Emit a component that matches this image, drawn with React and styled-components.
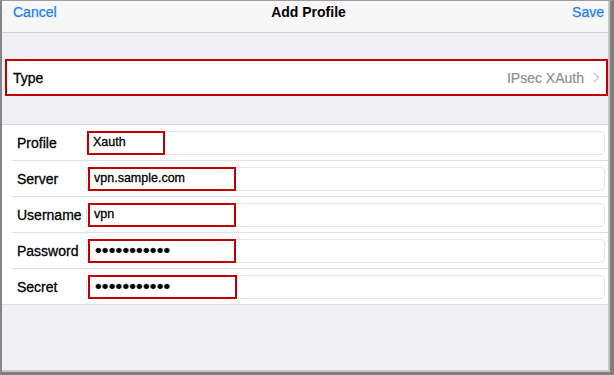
import React from "react";
import styled, { createGlobalStyle } from "styled-components";

const Global = createGlobalStyle`
  html, body { margin: 0; padding: 0; background: #ffffff; }
  body { font-family: "Liberation Sans", Arial, sans-serif; }
  * { box-sizing: border-box; }
`;

const Frame = styled.div`
  width: 614px;
  height: 375px;
  border-left: 2px solid #858585;
  border-top: 1px solid #9c9c9c;
  border-right: 4px solid #7e7e7e;
  border-bottom: 3px solid #7e7e7e;
  display: flex;
`;

const Screen = styled.div`
  flex: 1;
  display: flex;
  flex-direction: column;
  background: #efeff4;
  border-right: 2px solid #c6c6c6;
  border-bottom: 2px solid #c6c6c6;
  overflow: hidden;
`;

const NavBar = styled.div`
  height: 32px;
  background: #f7f7f7;
  border-bottom: 1px solid #cfcfd3;
  display: grid;
  grid-template-columns: 1fr auto 1fr;
  align-items: start;
  padding: 3px 4px 0 11px;
  font-size: 14px;
  line-height: 16px;
`;

const NavButton = styled.span`
  color: #1a7ff6;
  -webkit-text-stroke: 0.25px #1a7ff6;
  justify-self: ${(p) => (p.$end ? "end" : "start")};
`;

const Title = styled.span`
  font-weight: 700;
  color: #000;
`;

const Spacer = styled.div`
  height: ${(p) => p.$h}px;
  flex: none;
`;

const TypeRow = styled.div`
  height: 37px;
  margin-left: 3px;
  background: #fff;
  border: 2px solid #c00000;
  display: flex;
  align-items: center;
  padding: 0 6px 0 6px;
  font-size: 14px;
  color: #000;
  flex: none;
`;

const TypeLabel = styled.span`
  flex: 1;
  -webkit-text-stroke: 0.3px #000;
`;

const TypeValue = styled.span`
  color: #8e8e93;
  -webkit-text-stroke: 0.2px #8e8e93;
  margin-right: 9px;
`;

const Form = styled.div`
  background: #fff;
  border-top: 1px solid #d9d9dd;
  flex: none;
`;

const Row = styled.div`
  height: 36px;
  display: flex;
  align-items: center;
  padding: 0 3px 0 15px;
  position: relative;
  &::after {
    content: "";
    position: absolute;
    left: ${(p) => (p.$last ? 0 : 10)}px;
    right: 0;
    bottom: 0;
    height: 1px;
    background: #e0e0e4;
  }
`;

const Label = styled.span`
  width: 69px;
  flex: none;
  font-size: 14px;
  color: #000;
  -webkit-text-stroke: 0.3px #000;
  white-space: nowrap;
`;

const InputBox = styled.div`
  flex: 1;
  height: 24px;
  margin-top: -1px;
  border: 1px solid #e6e6e9;
  border-radius: 5px;
  display: flex;
  align-items: stretch;
  background: #fff;
`;

const Highlight = styled.div`
  width: ${(p) => p.$w}px;
  margin: -1px 0 -1px ${(p) => p.$offset || 0}px;
  border: 2px solid #c00000;
  display: flex;
  align-items: center;
  padding-left: ${(p) => (p.$dots ? "5px" : "4px")};
  font-size: ${(p) => (p.$dots ? "19px" : "12.5px")};
  letter-spacing: ${(p) => (p.$dots ? "0.2px" : "0")};
  color: #000;
  -webkit-text-stroke: 0.3px #000;
  line-height: 1;
  white-space: nowrap;
  overflow: hidden;
`;

const Chevron = () => (
  <svg width="7" height="11" viewBox="0 0 7 11" fill="none">
    <path d="M1 1l4.5 4.5L1 10" stroke="#c7c7cc" strokeWidth="1.3" />
  </svg>
);

const fields = [
  { label: "Profile", value: "Xauth", w: 78, offset: 0 },
  { label: "Server", value: "vpn.sample.com", w: 148, offset: 1 },
  { label: "Username", value: "vpn", w: 148, offset: 1 },
  { label: "Password", value: "•••••••••••", w: 148, offset: 1, dots: true },
  { label: "Secret", value: "•••••••••••", w: 149, offset: 1, dots: true },
];

export default function App() {
  return (
    <>
      <Global />
      <Frame>
        <Screen>
          <NavBar>
            <NavButton>Cancel</NavButton>
            <Title>Add Profile</Title>
            <NavButton $end>Save</NavButton>
          </NavBar>
          <Spacer $h={26} />
          <TypeRow>
            <TypeLabel>Type</TypeLabel>
            <TypeValue>IPsec XAuth</TypeValue>
            <Chevron />
          </TypeRow>
          <Spacer $h={28} />
          <Form>
            {fields.map((f, i) => (
              <Row key={f.label} $last={i === fields.length - 1}>
                <Label>{f.label}</Label>
                <InputBox>
                  <Highlight $w={f.w} $offset={f.offset} $dots={f.dots}>
                    {f.value}
                  </Highlight>
                </InputBox>
              </Row>
            ))}
          </Form>
        </Screen>
      </Frame>
    </>
  );
}
